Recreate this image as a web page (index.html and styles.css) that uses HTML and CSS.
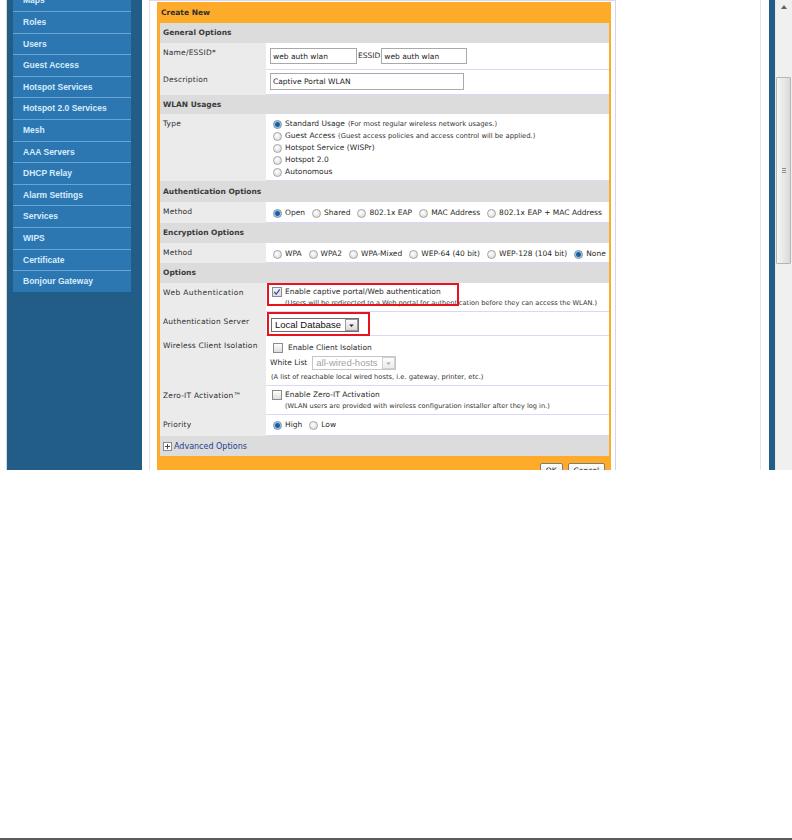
FILE: index.html
```html
<!DOCTYPE html>
<html lang="en">
<head>
  <meta charset="UTF-8">
  <meta name="viewport" content="width=device-width, initial-scale=1.0">
  <title>Create New WLAN</title>
  <link rel="stylesheet" href="styles.css">
</head>
<body>
  <div class="screen">
    <div class="shot">
      <div class="sidebar">
        <ul class="menu">
          <li>Maps</li>
          <li>Roles</li>
          <li>Users</li>
          <li>Guest Access</li>
          <li>Hotspot Services</li>
          <li>Hotspot 2.0 Services</li>
          <li>Mesh</li>
          <li>AAA Servers</li>
          <li>DHCP Relay</li>
          <li>Alarm Settings</li>
          <li>Services</li>
          <li>WIPS</li>
          <li>Certificate</li>
          <li>Bonjour Gateway</li>
        </ul>
      </div>

      <div class="frame">
        <div class="dialog">
          <div class="dlg-title">Create New</div>

          <div class="section">General Options</div>
          <div class="row row-name">
            <div class="label">Name/ESSID*</div>
            <div class="value">
              <input class="field field-name" type="text" value="web auth wlan">
              <span class="essid">ESSID</span>
              <input class="field field-essid" type="text" value="web auth wlan">
            </div>
          </div>
          <div class="row row-desc">
            <div class="label">Description</div>
            <div class="value">
              <input class="field field-desc" type="text" value="Captive Portal WLAN">
            </div>
          </div>

          <div class="section short">WLAN Usages</div>
          <div class="row row-type">
            <div class="label">Type</div>
            <div class="value">
              <div class="stack">
                <div class="opt"><span class="radio on"></span>Standard Usage<span class="note">(For most regular wireless network usages.)</span></div>
                <div class="opt"><span class="radio"></span>Guest Access<span class="note">(Guest access policies and access control will be applied.)</span></div>
                <div class="opt"><span class="radio"></span>Hotspot Service (WISPr)</div>
                <div class="opt"><span class="radio"></span>Hotspot 2.0</div>
                <div class="opt"><span class="radio"></span>Autonomous</div>
              </div>
            </div>
          </div>

          <div class="section tall">Authentication Options</div>
          <div class="row row-method">
            <div class="label">Method</div>
            <div class="value">
              <div class="choices">
                <span class="opt"><span class="radio on"></span>Open</span>
                <span class="opt"><span class="radio"></span>Shared</span>
                <span class="opt"><span class="radio"></span>802.1x EAP</span>
                <span class="opt"><span class="radio"></span>MAC Address</span>
                <span class="opt"><span class="radio"></span>802.1x EAP + MAC Address</span>
              </div>
            </div>
          </div>

          <div class="section">Encryption Options</div>
          <div class="row row-enc">
            <div class="label">Method</div>
            <div class="value">
              <div class="choices">
                <span class="opt"><span class="radio"></span>WPA</span>
                <span class="opt"><span class="radio"></span>WPA2</span>
                <span class="opt"><span class="radio"></span>WPA-Mixed</span>
                <span class="opt"><span class="radio"></span>WEP-64 (40 bit)</span>
                <span class="opt"><span class="radio"></span>WEP-128 (104 bit)</span>
                <span class="opt"><span class="radio on"></span>None</span>
              </div>
            </div>
          </div>

          <div class="section">Options</div>
          <div class="row row-web">
            <div class="label label-wide">Web Authentication</div>
            <div class="value">
              <div class="line"><span class="check on"><svg viewBox="0 0 10 10" width="8" height="8"><path d="M1.5 5 L4 7.6 L8.5 1.8" fill="none" stroke="#34479b" stroke-width="1.5"/></svg></span>Enable captive portal/Web authentication</div>
              <div class="hint">(Users will be redirected to a Web portal for authentication before they can access the WLAN.)</div>
              <div class="mark mark-web"></div>
            </div>
          </div>
          <div class="row row-server">
            <div class="label">Authentication Server</div>
            <div class="value">
              <div class="select">
                <span class="select-text">Local Database</span>
                <span class="select-btn"><svg viewBox="0 0 10 10" width="9" height="9"><path d="M2.5 4 L7.5 4 L5 6.8 Z" fill="#222"/></svg></span>
              </div>
              <div class="mark mark-server"></div>
            </div>
          </div>
          <div class="row row-iso">
            <div class="label">Wireless Client Isolation</div>
            <div class="value">
              <div class="line line-iso"><span class="check"></span>Enable Client Isolation</div>
              <div class="white-list">White List
                <div class="select select-off">
                  <span class="select-text">all-wired-hosts</span>
                  <span class="select-btn"><svg viewBox="0 0 10 10" width="9" height="9"><path d="M2.5 4 L7.5 4 L5 6.8 Z" fill="#aaa"/></svg></span>
                </div>
              </div>
              <div class="hint hint-left">(A list of reachable local wired hosts, i.e. gateway, printer, etc.)</div>
            </div>
          </div>
          <div class="row row-zero">
            <div class="label">Zero-IT Activation™</div>
            <div class="value">
              <div class="line"><span class="check"></span>Enable Zero-IT Activation</div>
              <div class="hint">(WLAN users are provided with wireless configuration installer after they log in.)</div>
            </div>
          </div>
          <div class="row row-prio">
            <div class="label">Priority</div>
            <div class="value">
              <div class="choices">
                <span class="opt"><span class="radio on"></span>High</span>
                <span class="opt"><span class="radio"></span>Low</span>
              </div>
            </div>
          </div>

          <div class="advanced">
            <svg class="plus" viewBox="0 0 9 9" width="9" height="9"><rect x="0.5" y="0.5" width="8" height="8" fill="#fff" stroke="#8a8a8a"/><path d="M2 4.5 H7 M4.5 2 V7" stroke="#444"/></svg>
            <span>Advanced Options</span>
          </div>

          <div class="dlg-foot">
            <span class="btn">OK</span>
            <span class="btn">Cancel</span>
          </div>
        </div>
      </div>

      <div class="blank"></div>
      <div class="edge"></div>
      <div class="scrollbar">
        <div class="sb-up"><span></span></div>
        <div class="thumb"><span class="grip"></span></div>
      </div>
    </div>
    <div class="rule"></div>
  </div>
</body>
</html>
```

FILE: styles.css
```css
* {
  box-sizing: border-box;
}
body {
  margin: 0;
  font-family: "DejaVu Sans", Verdana, sans-serif;
  font-size: 7.5px;
  color: #333;
  background: #fff;
}
.screen {
  height: 840px;
  display: flex;
  flex-direction: column;
}
.shot {
  height: 470px;
  display: flex;
  overflow: hidden;
  padding-left: 6px;
}

/* left menu */
.sidebar {
  flex: none;
  width: 136px;
  border-left: 1px solid #d8d8d8;
  padding-left: 6px;
  background: #225d88;
  overflow: hidden;
}
.menu {
  list-style: none;
  margin: -10.6px 0 0;
  padding: 0;
  width: 118px;
}
.menu li {
  height: 21.6px;
  border-top: 1px solid #67a5d7;
  background: #2c77b2;
  color: #d6ecfb;
  font: bold 8.5px/20.6px "Liberation Sans", Arial, sans-serif;
  padding-left: 10px;
  white-space: nowrap;
}

/* dialog */
.frame {
  flex: none;
  width: 467px;
  margin-left: 7px;
  border-left: 1px solid #e2e2e2;
  border-top: 1px solid #ddd5f3;
  border-right: 1px solid #d9d0f2;
  padding: 1px 4px 0 7px;
}
.dialog {
  width: 454px;
  background: #ffab2a;
  padding: 0 2px 0 3px;
}
.dlg-title {
  height: 21px;
  line-height: 21px;
  padding-left: 1px;
  font-weight: bold;
  color: #2e2e2e;
}
.section {
  height: 20px;
  line-height: 20px;
  background: #dcdcdc;
  padding-left: 3px;
  font-weight: bold;
  color: #3a3a3a;
}
.section.short {
  height: 19px;
  line-height: 19px;
}
.section.tall {
  height: 21px;
  line-height: 21px;
}
.row {
  display: grid;
  grid-template-columns: 106px 1fr;
}
.label {
  background: #ebebeb;
  padding: 4px 0 0 3px;
  line-height: 12px;
  white-space: nowrap;
  color: #2e2e2e;
  letter-spacing: 0.2px;
}
.label-wide {
  letter-spacing: 0.4px;
}
.value {
  position: relative;
  background: #fff;
  border-bottom: 1px solid #ddd6f4;
  padding-left: 4px;
  line-height: 12px;
  color: #2a2a2a;
  white-space: nowrap;
}
.row-name { height: 27px; }
.row-name .value { padding-top: 5px; display: flex; align-items: flex-start; }
.row-desc { height: 25px; }
.row-desc .value { padding-top: 3px; }
.row-type { height: 67px; }
.row-type .value { padding-top: 4px; }
.row-method { height: 21px; }
.row-method .value { padding-top: 5px; }
.row-enc { height: 20px; }
.row-enc .value { padding-top: 5px; }
.row-web { height: 29px; }
.row-web .value { padding-top: 3px; }
.row-server { height: 24px; }
.row-server .value { padding-top: 6px; }
.row-iso { height: 50px; }
.row-iso .value { padding-top: 6px; }
.row-zero { height: 29px; }
.row-zero .value { padding-top: 3px; }
.row-prio { height: 21px; }
.row-prio .value { padding-top: 4px; }

.field {
  display: block;
  height: 16px;
  border: 1px solid #a9a9a9;
  padding: 0 2px;
  font: 7.5px "DejaVu Sans", Verdana, sans-serif;
  color: #222;
  background: #fff;
  margin: 0;
}
.field-name { width: 87px; }
.field-essid { width: 86px; }
.field-desc { width: 194px; height: 17px; }
.essid {
  margin: 0 1px;
  line-height: 16px;
}

/* radios and checkboxes */
.radio {
  display: inline-block;
  flex: none;
  width: 9px;
  height: 9px;
  border-radius: 50%;
  border: 1px solid #a3a3a3;
  background: radial-gradient(circle at 40% 35%, #fff, #d6d6d6);
  margin-right: 3px;
}
.radio.on {
  border-color: #6f8fb0;
  background: radial-gradient(circle, #1d5d9a 0 2px, #7eaedb 2.6px, #e6eef7 4px);
}
.check {
  display: inline-flex;
  align-items: center;
  justify-content: center;
  flex: none;
  width: 10px;
  height: 10px;
  border: 1px solid #8b8b8b;
  background: linear-gradient(#fdfdfd, #dedede);
  margin-right: 3px;
}
.check.on {
  background: linear-gradient(#f2f2f8, #dcdce6);
}
.stack {
  padding-left: 3px;
}
.stack .opt {
  height: 12px;
  display: flex;
  align-items: center;
}
.note {
  font-size: 6.8px;
  margin-left: 3px;
  color: #333;
}
.choices {
  display: flex;
  align-items: center;
  gap: 7px;
  padding-left: 3px;
  height: 12px;
}
.choices .opt {
  display: flex;
  align-items: center;
}
.line {
  display: flex;
  align-items: center;
  height: 12px;
  padding-left: 2px;
}
.line-iso {
  padding-left: 3px;
}
.line-iso .check {
  margin-right: 5px;
}
.hint {
  font-size: 6.6px;
  line-height: 9px;
  padding-left: 15px;
  margin-top: 1px;
  color: #333;
}
.hint-left {
  padding-left: 1px;
  margin-top: 2px;
  font-size: 6.7px;
}

/* selects */
.select {
  display: inline-flex;
  align-items: stretch;
  height: 14px;
  margin-left: 1px;
  border: 1px solid #6e6e6e;
  background: #fff;
  font: 9.5px "Liberation Sans", Arial, sans-serif;
  color: #111;
}
.select-text {
  line-height: 12px;
  padding: 0 4px 0 3px;
}
.select-btn {
  width: 13px;
  display: flex;
  align-items: center;
  justify-content: center;
  border: 1px solid #9a9a9a;
  background: linear-gradient(#fafafa, #d9d9d9);
}
.white-list {
  display: flex;
  align-items: center;
  height: 16px;
  margin-top: 1px;
}
.select-off {
  margin-left: 5px;
  width: 84px;
  border-color: #c6c6c6;
  color: #a3a3a3;
  justify-content: space-between;
}
.select-off .select-btn {
  border-color: #d0d0d0;
  background: linear-gradient(#fdfdfd, #ececec);
}

/* red annotation boxes */
.mark {
  position: absolute;
  left: 1px;
  top: 0;
  border: 2px solid #e6141c;
}
.mark-web {
  width: 192px;
  height: 23px;
}
.mark-server {
  width: 103px;
  height: 24px;
}

.advanced {
  height: 20px;
  background: #dcdcdc;
  display: flex;
  align-items: center;
  padding-left: 3px;
  font-size: 8px;
  color: #1c3c94;
}
.plus {
  margin-right: 2px;
}
.dlg-foot {
  display: flex;
  justify-content: flex-end;
  gap: 5px;
  padding: 7px 4px 0 0;
  height: 30px;
}
.btn {
  height: 16px;
  line-height: 14px;
  padding: 0 5px;
  border: 1px solid #7b7b7b;
  border-radius: 2px;
  background: linear-gradient(#ffffff, #dddddd);
  color: #222;
}

/* right side and scrollbar */
.blank {
  flex: none;
  width: 145px;
  border-right: 1px solid #e6e6e6;
}
.edge {
  flex: none;
  width: 6px;
  margin-left: 8px;
  background: #225d88;
}
.scrollbar {
  flex: 1;
  background: #f0f0f0;
  border-left: 1px solid #e8e8e8;
}
.sb-up {
  height: 14px;
  display: flex;
  justify-content: center;
  align-items: center;
}
.sb-up span {
  border-left: 3px solid transparent;
  border-right: 3px solid transparent;
  border-bottom: 4px solid #5f5f5f;
}
.thumb {
  margin: 63px 1px 0 0;
  height: 187px;
  border: 1px solid #b5b5b5;
  border-radius: 1px;
  background: linear-gradient(to right, #f6f6f6, #dadada);
  display: flex;
  align-items: center;
  justify-content: center;
}
.grip {
  width: 4px;
  height: 5px;
  background: repeating-linear-gradient(#8c8c8c 0 1px, transparent 1px 2px);
}
.rule {
  margin-top: auto;
  height: 2px;
  background: #5c5c5c;
}
```
